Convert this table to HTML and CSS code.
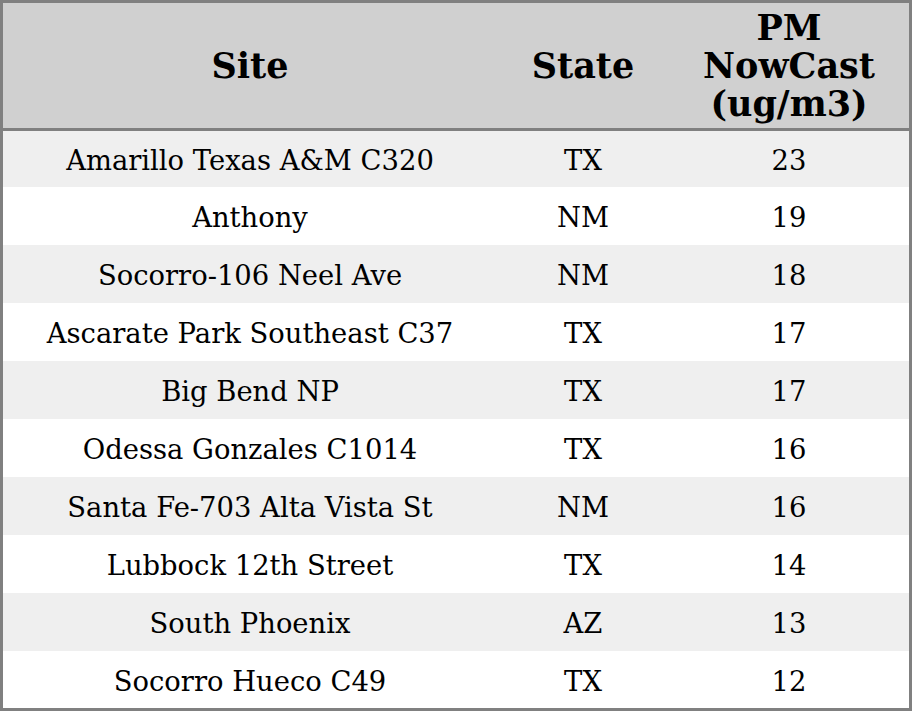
FILE: index.html
```html
<!DOCTYPE html>
<html>
<head>
<meta charset="utf-8">
<link rel="stylesheet" href="styles.css">
</head>
<body>
<table class="aq">
  <colgroup>
    <col class="c-site">
    <col class="c-state">
    <col class="c-pm">
  </colgroup>
  <thead>
    <tr><th>Site</th><th>State</th><th>PM<br>NowCast<br>(ug/m3)</th></tr>
  </thead>
  <tbody>
    <tr><td>Amarillo Texas A&amp;M C320</td><td>TX</td><td>23</td></tr>
    <tr><td>Anthony</td><td>NM</td><td>19</td></tr>
    <tr><td>Socorro-106 Neel Ave</td><td>NM</td><td>18</td></tr>
    <tr><td>Ascarate Park Southeast C37</td><td>TX</td><td>17</td></tr>
    <tr><td>Big Bend NP</td><td>TX</td><td>17</td></tr>
    <tr><td>Odessa Gonzales C1014</td><td>TX</td><td>16</td></tr>
    <tr><td>Santa Fe-703 Alta Vista St</td><td>NM</td><td>16</td></tr>
    <tr><td>Lubbock 12th Street</td><td>TX</td><td>14</td></tr>
    <tr><td>South Phoenix</td><td>AZ</td><td>13</td></tr>
    <tr><td>Socorro Hueco C49</td><td>TX</td><td>12</td></tr>
  </tbody>
</table>
</body>
</html>
```
FILE: styles.css
```css
html, body {
  margin: 0;
  padding: 0;
  background: #ffffff;
}
.aq {
  width: 912px;
  border-collapse: separate;
  border-spacing: 0;
  border: 3px solid #808080;
  font-family: "DejaVu Serif", serif;
  color: #000;
  table-layout: fixed;
}
.c-site { width: 494px; }
.c-state { width: 172px; }
.c-pm { width: 240px; }
.aq th {
  background: #d0d0d0;
  font-size: 35px;
  font-weight: bold;
  line-height: 38px;
  height: 114px;
  padding: 6px 0 5px;
  text-align: center;
  vertical-align: middle;
  border-bottom: 3px solid #808080;
}
.aq td {
  font-size: 27.4px;
  line-height: 30px;
  height: 54px;
  padding: 4px 0 0;
  text-align: center;
  vertical-align: middle;
}
.aq tbody tr:first-child td { height: 52px; }
.aq tbody tr:last-child td { height: 53px; }
.aq tbody tr:nth-child(odd) td { background: #efefef; }
.aq tbody tr:nth-child(even) td { background: #ffffff; }
```
